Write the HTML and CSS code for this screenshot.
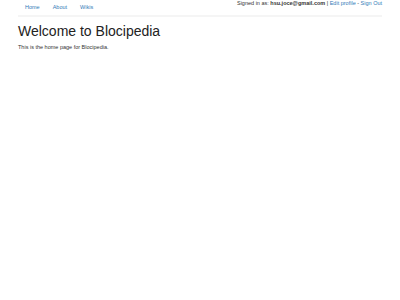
FILE: index.html
```html
<!DOCTYPE html>
<html lang="en">
<head>
    <meta charset="UTF-8">
    <title>Blocipedia</title>
    <link rel="stylesheet" href="styles.css">
</head>
<body>
    <div class="container">
        <div class="header">
            <ul class="nav">
                <li><a href="#">Home</a></li>
                <li><a href="#">About</a></li>
                <li><a href="#">Wikis</a></li>
            </ul>
            <div class="user-info">
                Signed in as: <strong>hsu.joce@gmail.com</strong> | <a href="#">Edit profile</a> - <a href="#">Sign Out</a>
            </div>
        </div>
        <h1>Welcome to Blocipedia</h1>
        <p>This is the home page for Blocipedia.</p>
    </div>
</body>
</html>
```
FILE: styles.css
```css
body {
    margin: 0;
    background: white;
    font-family: "Liberation Sans", Arial, sans-serif;
    color: #333;
}

.container {
    width: 364px;
    margin: 0 auto;
}

a {
    color: #337ab7;
    text-decoration: none;
}

.header {
    display: flex;
    justify-content: space-between;
    align-items: flex-start;
    border-bottom: 2px solid #f5f5f5;
}

.nav {
    list-style: none;
    margin: 0;
    padding: 3px 0 4px 7px;
    display: flex;
    gap: 13px;
    font-size: 5.5px;
    line-height: 8px;
}

.user-info {
    font-size: 5.5px;
    line-height: 7px;
}

h1 {
    font-weight: normal;
    font-size: 14px;
    line-height: 16px;
    margin: 6px 0 5px;
    color: #222;
}

p {
    font-size: 5.5px;
    margin: 0;
}
```
